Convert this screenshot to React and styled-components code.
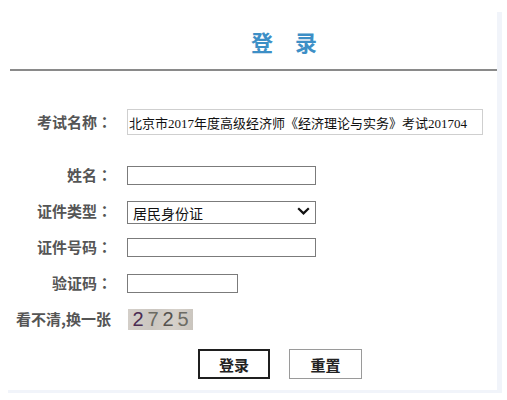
import React from "react";
import styled, { createGlobalStyle } from "styled-components";

const Global = createGlobalStyle`
  html, body { margin: 0; padding: 0; background: #ffffff; }
  body { font-family: "Noto Sans CJK SC", "Noto Sans", sans-serif; }
  * { box-sizing: border-box; }
`;

const Panel = styled.div`
  margin: 12px 0 0 8px;
  width: 494px;
  height: 381px;
  background: #ffffff;
  border-right: 5px solid #f1f4fa;
  border-bottom: 3px solid #f1f4fa;
`;

const Header = styled.div`
  height: 57px;
  display: flex;
  align-items: center;
  justify-content: center;
  padding-left: 63px;
`;

const Title = styled.h1`
  margin: 0;
  font-family: "Noto Sans CJK SC", sans-serif;
  font-size: 22px;
  font-weight: 700;
  line-height: 28px;
  color: #3d8fc6;
`;

const Divider = styled.div`
  margin-left: 2px;
  border-top: 2px solid #8a8a8a;
`;

const Form = styled.form`
  margin: 33px 0 0 0;
  display: flex;
  flex-direction: column;
`;

const Row = styled.div`
  display: grid;
  grid-template-columns: 104px 1fr;
  column-gap: 15px;
  align-items: center;
  height: 36px;
  margin-bottom: ${(p) => (p.$after ? p.$after : 0)}px;
`;

const Label = styled.label`
  text-align: right;
  white-space: nowrap;
  font-family: "Noto Sans CJK SC", sans-serif;
  font-size: 15px;
  font-weight: 700;
  color: #555555;
  line-height: 20px;
`;

const Colon = styled.span`
  font-family: "Noto Sans CJK TC", sans-serif;
`;

const ExamInput = styled.input`
  width: 356px;
  height: 26px;
  padding: 0 1px;
  border: 1px solid #cfcfcf;
  background: #ffffff;
  font-family: "Liberation Serif", "Noto Sans CJK SC", serif;
  font-size: 13px;
  color: #111;
  outline: none;
`;

const TextInput = styled.input`
  width: ${(p) => p.$w}px;
  height: 19px;
  padding: 0 3px;
  border: 1px solid #7b7b7b;
  background: #ffffff;
  font-size: 13px;
  outline: none;
`;

const SelectWrap = styled.div`
  position: relative;
  width: 189px;
  height: 23px;
`;

const Select = styled.select`
  appearance: none;
  -webkit-appearance: none;
  width: 100%;
  height: 100%;
  padding: 0 0 0 5px;
  border: 1px solid #7b7b7b;
  border-radius: 0;
  background: #ffffff;
  font-family: "Noto Sans CJK SC", sans-serif;
  font-size: 14px;
  color: #111;
  outline: none;
`;

const Chevron = styled.svg`
  position: absolute;
  right: 6px;
  top: 7px;
  pointer-events: none;
`;

const RefreshLink = styled.a`
  text-align: right;
  white-space: nowrap;
  font-family: "Noto Sans CJK SC", sans-serif;
  font-size: 15px;
  font-weight: 700;
  color: #555555;
  text-decoration: none;
  line-height: 20px;
  padding-right: 1px;
`;

const Captcha = styled.div`
  width: 65px;
  height: 21px;
  margin-left: 1px;
  display: flex;
  align-items: center;
  justify-content: center;
  gap: 3px;
  background: linear-gradient(100deg, #d4cfc9 0%, #cbc6c0 40%, #d6d1ca 70%, #c9c4bd 100%);
  font-family: "Liberation Sans", "DejaVu Sans", sans-serif;
  font-size: 20px;
  line-height: 20px;
`;

const Digit = styled.span`
  color: ${(p) => p.$c};
  width: 12px;
  text-align: center;
`;

const ButtonRow = styled.div`
  margin-top: 12px;
  display: flex;
  justify-content: center;
  gap: 19px;
  padding-left: 55px;
`;

const Button = styled.button`
  width: ${(p) => p.$w}px;
  height: 30px;
  background: #ffffff;
  border: ${(p) => (p.$primary ? "2px solid #1f1f1f" : "1px solid #9a9a9a")};
  font-family: "Noto Sans CJK SC", sans-serif;
  font-size: 15px;
  font-weight: 700;
  color: #222;
  padding: 0;
  cursor: pointer;
`;

const FieldLabel = ({ children }) => (
  <Label>
    {children}
    <Colon>：</Colon>
  </Label>
);

export default function App() {
  return (
    <>
      <Global />
      <Panel>
        <Header>
          <Title>登　录</Title>
        </Header>
        <Divider />
        <Form onSubmit={(e) => e.preventDefault()}>
          <Row $after={17}>
            <FieldLabel>考试名称</FieldLabel>
            <ExamInput
              readOnly
              value="北京市2017年度高级经济师《经济理论与实务》考试201704"
            />
          </Row>
          <Row>
            <FieldLabel>姓名</FieldLabel>
            <TextInput $w={189} />
          </Row>
          <Row>
            <FieldLabel>证件类型</FieldLabel>
            <SelectWrap>
              <Select defaultValue="id">
                <option value="id">居民身份证</option>
                <option value="passport">护照</option>
                <option value="other">其他</option>
              </Select>
              <Chevron width="13" height="8" viewBox="0 0 13 8">
                <path
                  d="M1.2 1.2 L6.5 6.4 L11.8 1.2"
                  fill="none"
                  stroke="#111"
                  strokeWidth="2.2"
                />
              </Chevron>
            </SelectWrap>
          </Row>
          <Row>
            <FieldLabel>证件号码</FieldLabel>
            <TextInput $w={189} />
          </Row>
          <Row>
            <FieldLabel>验证码</FieldLabel>
            <TextInput $w={111} />
          </Row>
          <Row>
            <RefreshLink href="#">看不清,换一张</RefreshLink>
            <Captcha>
              <Digit $c="#4b2c52">2</Digit>
              <Digit $c="#6a6a62">7</Digit>
              <Digit $c="#55524e">2</Digit>
              <Digit $c="#6d6c64">5</Digit>
            </Captcha>
          </Row>
          <ButtonRow>
            <Button $primary $w={72} type="submit">登录</Button>
            <Button $w={73} type="reset">重置</Button>
          </ButtonRow>
        </Form>
      </Panel>
    </>
  );
}
